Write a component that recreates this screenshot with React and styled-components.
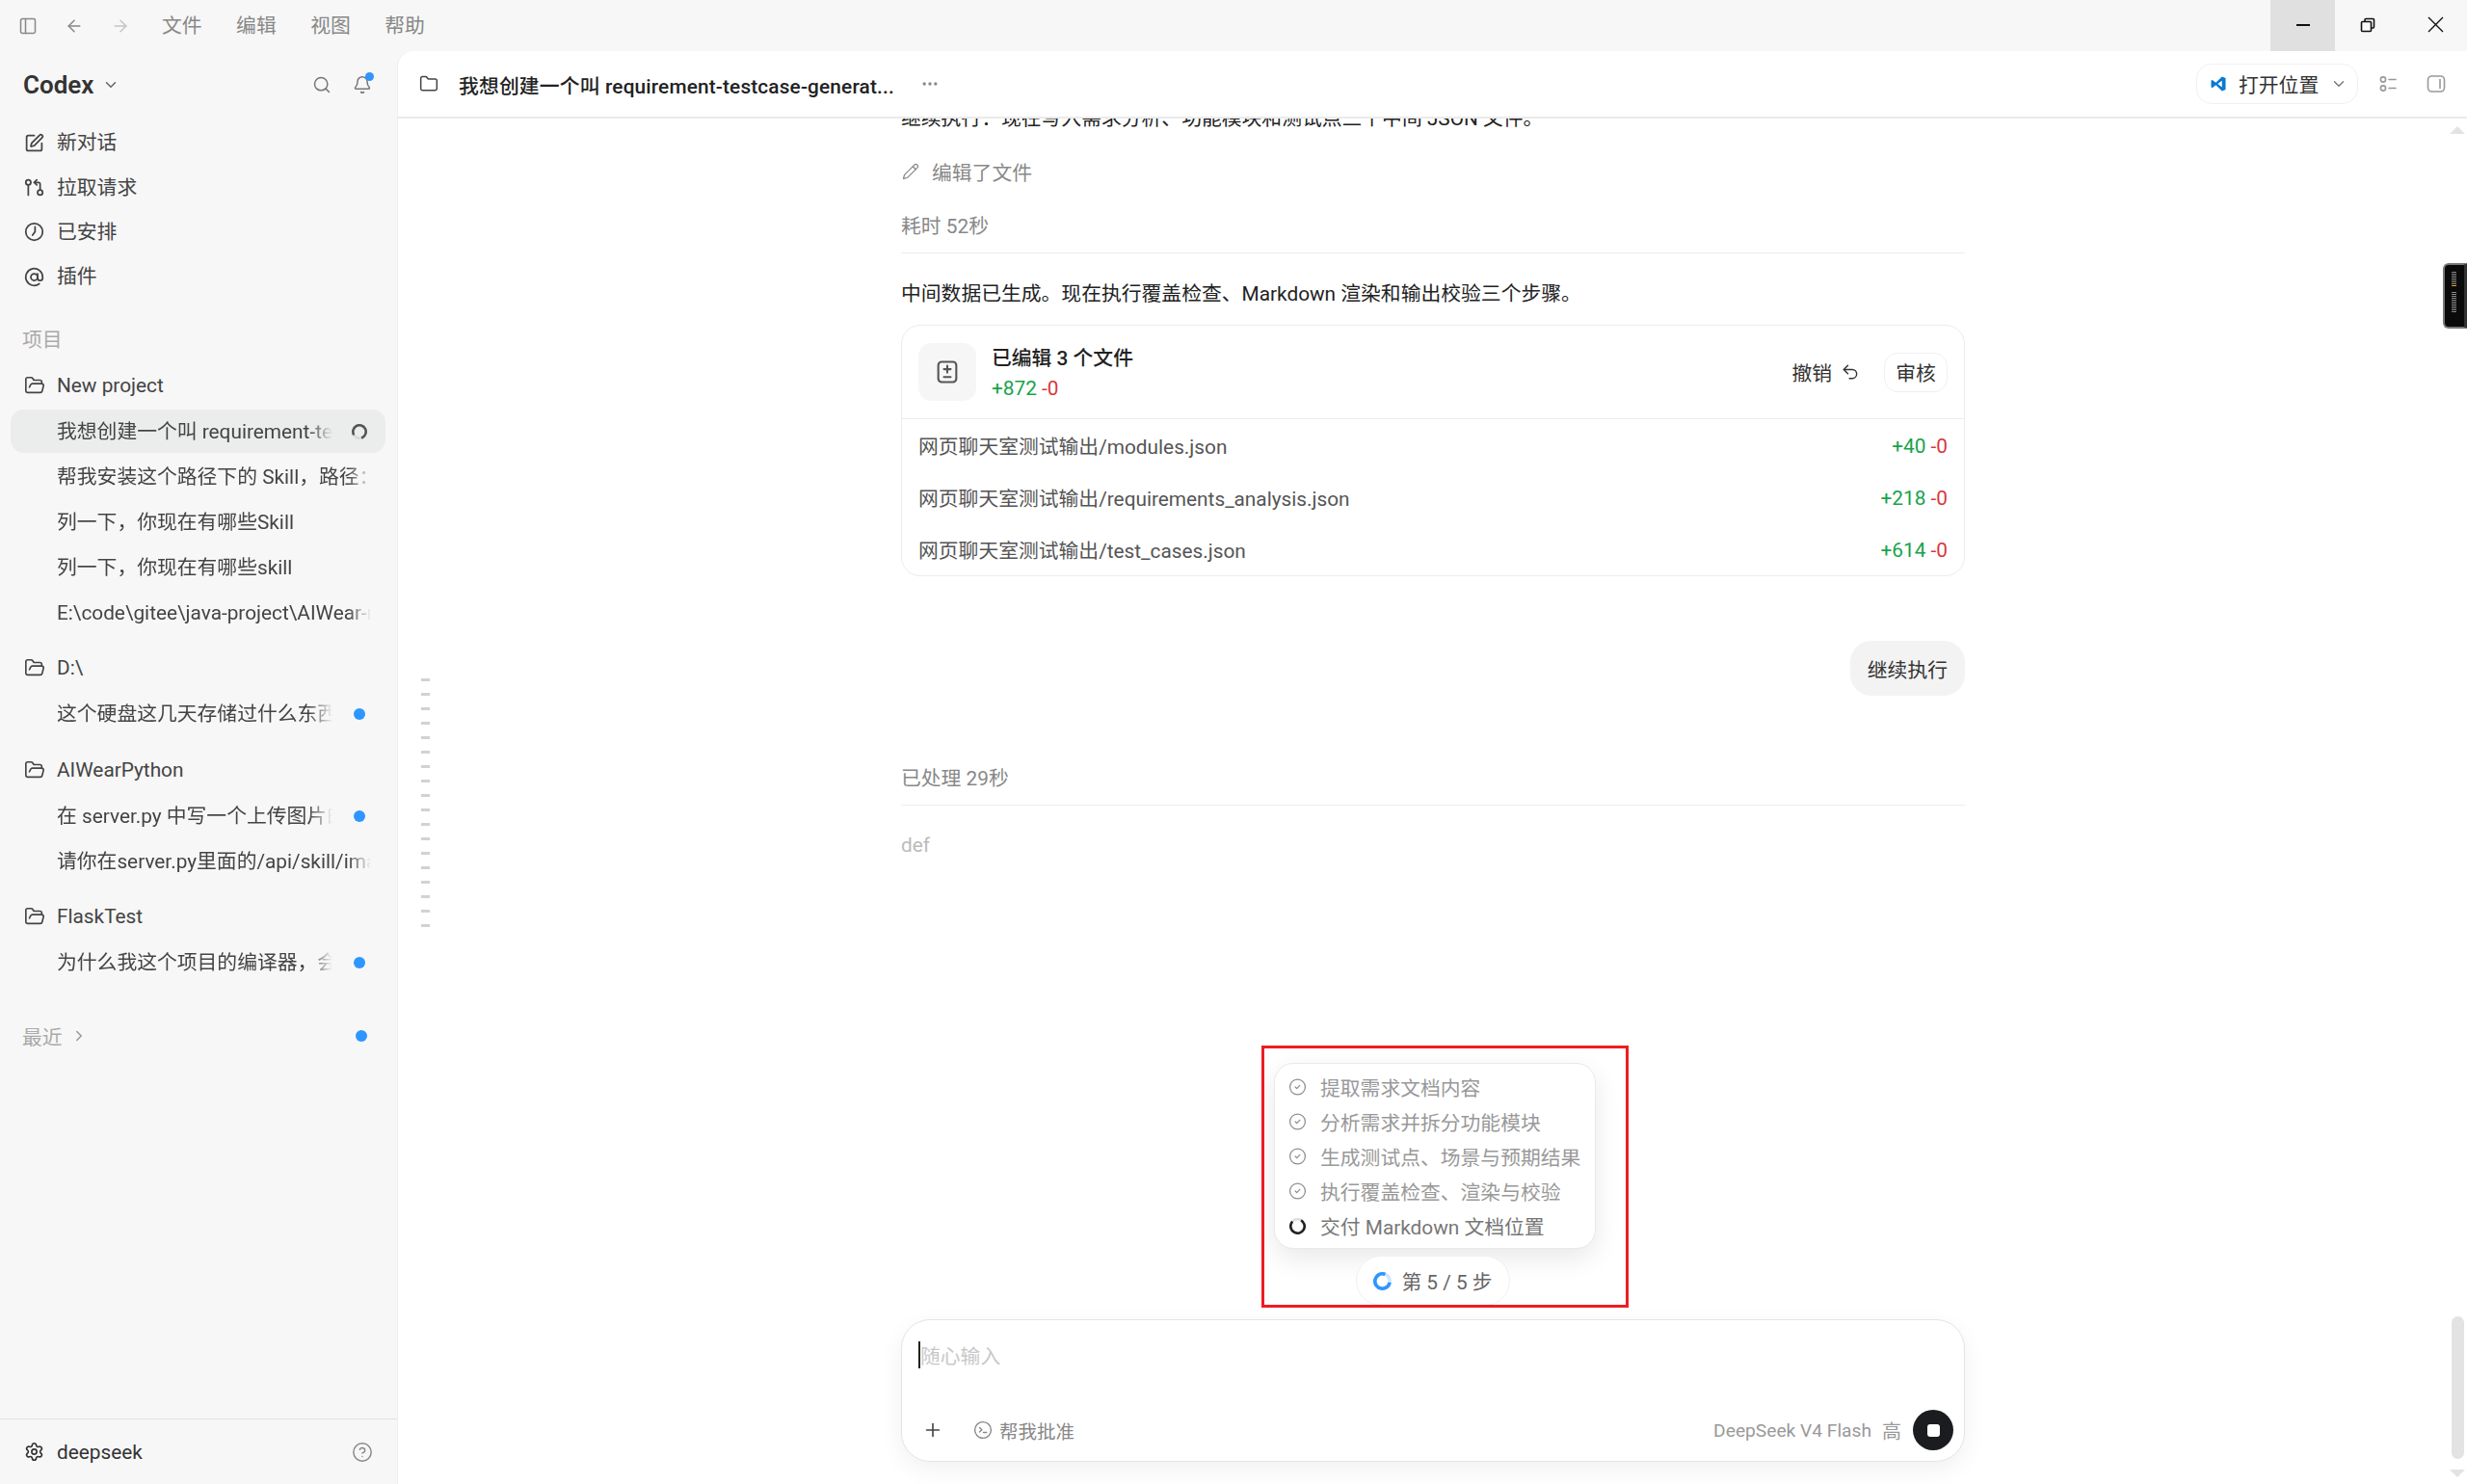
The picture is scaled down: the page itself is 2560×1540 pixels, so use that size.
import styled, { createGlobalStyle } from "styled-components";
import {
  ArrowLeft,
  ArrowRight,
  AtSign,
  Bell,
  ChevronDown,
  ChevronRight,
  CircleCheck,
  CircleHelp,
  Ellipsis,
  Folder,
  FolderOpen,
  GitPullRequestArrow,
  PanelLeft,
  Pencil,
  Plus,
  Search,
  Settings,
  SquarePen,
  Undo2,
} from "lucide-react";

const GlobalStyle = createGlobalStyle`
  html, body {
    margin: 0;
    padding: 0;
    background: #f7f7f7;
    font-family: Roboto, "Noto Sans CJK SC", sans-serif;
    font-size: 20.8px;
    color: #333;
  }
  * { box-sizing: border-box; }
`;

const Page = styled.div`
  width: 2560px;
  height: 1540px;
  display: flex;
  flex-direction: column;
  overflow: hidden;
  background: #f7f7f7;
`;

/* barra de titulo */
const TitleBar = styled.div`
  height: 53px;
  flex-shrink: 0;
  display: flex;
  align-items: center;
  padding-left: 19px;
  color: #888;
`;

const TitleIcons = styled.div`
  display: flex;
  align-items: center;
  gap: 28px;
  margin-right: 33px;
`;

const Menu = styled.div`
  display: flex;
  gap: 35.5px;
`;

const MenuItem = styled.span`
  color: #888;
  font-size: 20.8px;
  line-height: 30px;
`;

const WindowButtons = styled.div`
  display: flex;
  height: 53px;
  margin-left: auto;
`;

const WindowButton = styled.div`
  width: ${({ $wide }) => ($wide ? "70px" : "67px")};
  height: 53px;
  padding-bottom: 2px;
  padding-left: ${({ $wide }) => ($wide ? "5px" : "0")};
  display: flex;
  align-items: center;
  justify-content: center;
  background: ${({ $active }) => ($active ? "#e0e0e0" : "transparent")};
  color: #111;
`;

const Body = styled.div`
  flex: 1;
  display: flex;
  min-height: 0;
`;

/* barra lateral */
const Sidebar = styled.aside`
  width: 413px;
  flex-shrink: 0;
  display: flex;
  flex-direction: column;
`;

const SidebarHead = styled.div`
  height: 72px;
  display: flex;
  align-items: center;
  padding: 0 24px 2px;
`;

const Brand = styled.div`
  display: flex;
  align-items: center;
  gap: 8px;
  font-size: 26px;
  font-weight: 600;
  color: #333;
`;

const HeadActions = styled.div`
  margin-left: auto;
  display: flex;
  align-items: center;
  gap: 22px;
  color: #777;
  padding-right: 3px;
`;

const BellWrap = styled.span`
  position: relative;
  display: flex;
`;

const BellDot = styled.i`
  position: absolute;
  top: -3px;
  right: -2px;
  width: 9px;
  height: 9px;
  border-radius: 50%;
  background: #2f96ff;
`;

const NavRow = styled.div`
  height: 46.4px;
  display: flex;
  align-items: center;
  gap: 13px;
  padding-left: 25px;
  color: #444;
  line-height: 30px;
`;

const SectionLabel = styled.div`
  height: 47.5px;
  margin-top: 17px;
  padding-left: 23px;
  display: flex;
  align-items: center;
  color: #aaa;
`;

const ProjectRow = styled.div`
  height: 49px;
  margin-top: ${({ $first }) => ($first ? "0" : "9.5px")};
  display: flex;
  align-items: center;
  gap: 12px;
  padding-left: 25px;
  color: #444;
`;

const SessionRow = styled.div`
  height: ${({ $active }) => ($active ? "45px" : "47px")};
  margin: ${({ $active }) => ($active ? "1px 13px 1px 11px" : "0 13px 0 11px")};
  padding-left: 48px;
  display: flex;
  align-items: center;
  position: relative;
  border-radius: 14px;
  background: ${({ $active }) => ($active ? "#ebecec" : "transparent")};
  color: #444;
`;

const SessionTitle = styled.span`
  display: block;
  width: ${({ $short }) => ($short ? "286px" : "326px")};
  overflow: hidden;
  white-space: nowrap;
  line-height: 30px;
  -webkit-mask-image: linear-gradient(to right, #000 calc(100% - 24px), transparent);
  mask-image: linear-gradient(to right, #000 calc(100% - 24px), transparent);
`;

const TrailSlot = styled.span`
  position: absolute;
  right: 18px;
  top: 0;
  bottom: 0;
  width: 18px;
  display: flex;
  align-items: center;
  justify-content: center;
`;

const BlueDot = styled.i`
  width: 12px;
  height: 12px;
  border-radius: 50%;
  background: #2f96ff;
`;

const RecentRow = styled.div`
  height: 46px;
  margin: 29px 13px 0 23px;
  display: flex;
  align-items: center;
  gap: 8px;
  position: relative;
  color: #aaa;
`;

const RecentDot = styled(BlueDot)`
  margin-left: auto;
  margin-right: 19px;
`;

const SidebarFooter = styled.div`
  margin-top: auto;
  height: 68px;
  border-top: 1px solid #e2e2e2;
  display: flex;
  align-items: center;
  gap: 13px;
  padding: 0 26px 0 25px;
  color: #333;
`;

const HelpIcon = styled.span`
  margin-left: auto;
  display: flex;
  color: #888;
`;

/* area principal */
const Main = styled.main`
  flex: 1;
  min-width: 0;
  display: flex;
  flex-direction: column;
  background: #fff;
  border-top-left-radius: 16px;
  box-shadow: -1px 0 0 #efefef;
`;

const MainHeader = styled.header`
  height: 70px;
  flex-shrink: 0;
  display: flex;
  align-items: center;
  padding: 0 0 0 22px;
  border-bottom: 2px solid #ebebeb;
`;

const HeaderTitle = styled.span`
  margin-left: 21px;
  font-weight: 500;
  color: #222;
  line-height: 30px;
  letter-spacing: 0.16px;
  position: relative;
  top: 3px;
`;

const HeaderMore = styled.span`
  display: flex;
  margin-left: 27px;
  color: #888;
`;

const OpenButton = styled.div`
  margin-left: auto;
  width: 168px;
  height: 42px;
  border: 1px solid #f0f0f0;
  border-radius: 16px;
  display: flex;
  align-items: center;
  gap: 12px;
  padding-left: 13px;
  color: #333;
`;

const OpenChevron = styled.span`
  display: flex;
  color: #777;
  margin-left: 0;
`;

const HeaderTools = styled.div`
  display: flex;
  align-items: center;
  gap: 30px;
  margin: 0 22px 0 21px;
  color: #999;
`;

const Scroller = styled.div`
  flex: 1;
  min-height: 0;
  position: relative;
  overflow: hidden;
`;

const Column = styled.div`
  width: 1104px;
  height: 100%;
  margin-left: 522px;
  display: flex;
  flex-direction: column;
  color: #222;
`;

const Paragraph = styled.div`
  line-height: 34px;
  margin-top: ${({ $top }) => $top || "0"};
  white-space: nowrap;
`;

const EditedLine = styled.div`
  height: 34px;
  margin-top: 21px;
  display: flex;
  align-items: center;
  gap: 13px;
  padding-left: 1px;
  color: #888;
`;

const DurationLine = styled.div`
  line-height: 34px;
  margin-top: ${({ $top }) => $top};
  padding-bottom: 10px;
  border-bottom: 1px solid #ececec;
  color: #888;
`;

const Card = styled.section`
  margin-top: 15px;
  border: 1px solid #ececec;
  border-radius: 20px;
  overflow: hidden;
`;

const CardHeader = styled.div`
  height: 97px;
  display: flex;
  align-items: center;
  padding: 0 17px;
  border-bottom: 1px solid #ececec;
`;

const CardIconBox = styled.div`
  width: 60px;
  height: 60px;
  border-radius: 14px;
  background: #f6f6f6;
  display: flex;
  align-items: center;
  justify-content: center;
  color: #555;
`;

const CardSummary = styled.div`
  margin-left: 16px;
  display: flex;
  flex-direction: column;
  gap: 1px;
`;

const CardTitle = styled.div`
  font-weight: 500;
  line-height: 30px;
  color: #222;
`;

const Stat = styled.span`
  font-size: 20.8px;
  line-height: 28px;
  white-space: nowrap;
  position: relative;
  top: 1px;
`;

const Added = styled.span`
  color: #16a34a;
`;

const Removed = styled.span`
  color: #d9363e;
`;

const CardActions = styled.div`
  margin-left: auto;
  display: flex;
  align-items: center;
  color: #333;
`;

const UndoLink = styled.span`
  display: flex;
  align-items: center;
  gap: 9px;
  margin-right: 25px;
`;

const ReviewButton = styled.span`
  width: 66px;
  height: 41px;
  border: 1px solid #f0f0f0;
  border-radius: 14px;
  display: flex;
  align-items: center;
  justify-content: center;
`;

const FileRow = styled.div`
  height: 54px;
  display: flex;
  align-items: center;
  justify-content: space-between;
  padding: 0 17px;
  color: #555;
`;

const Bubble = styled.div`
  margin-top: 67px;
  align-self: flex-end;
  height: 57px;
  padding: 0 18px;
  display: flex;
  align-items: center;
  background: #f3f3f3;
  border-radius: 22px;
  color: #333;
`;

const Faded = styled.div`
  margin-top: 24px;
  line-height: 34px;
  color: #bbb;
`;

/* lista de passos */
const StepsDock = styled.div`
  position: relative;
  margin-top: auto;
  margin-left: 387px;
  width: 334px;
`;

const StepsCard = styled.div`
  height: 193px;
  padding-top: 6px;
  background: #fff;
  border: 1px solid #e9e9e9;
  border-radius: 20px;
  box-shadow: 0 10px 28px rgba(0, 0, 0, 0.09);
`;

const StepRow = styled.div`
  height: 36px;
  display: flex;
  align-items: center;
  gap: 14px;
  padding-left: 14px;
  white-space: nowrap;
  color: ${({ $current }) => ($current ? "#777" : "#999")};
`;

const StepIcon = styled.span`
  width: 19px;
  display: flex;
  justify-content: center;
  color: #8f8f8f;
`;

const StepPill = styled.div`
  width: 160px;
  height: 52px;
  margin: 7px 0 0 85px;
  border: 1px solid #f0f0f0;
  border-radius: 26px;
  display: flex;
  align-items: center;
  justify-content: center;
  gap: 10px;
  color: #666;
  background: #fff;
`;

const RedMark = styled.div`
  position: absolute;
  top: -18px;
  left: -13px;
  right: -34px;
  bottom: -2px;
  border: 3px solid #ed1c24;
  pointer-events: none;
`;

/* caixa de entrada */
const Composer = styled.div`
  height: 148px;
  margin: 14px 0 23px;
  flex-shrink: 0;
  border: 1px solid #e4e4e4;
  border-radius: 30px;
  background: #fff;
  box-shadow: 0 8px 26px rgba(0, 0, 0, 0.06);
  display: flex;
  flex-direction: column;
  padding: 21px 11px 11px 17px;
`;

const InputLine = styled.div`
  display: flex;
  align-items: center;
  height: 30px;
  color: #c8c8c8;
`;

const Caret = styled.i`
  width: 2px;
  height: 28px;
  background: #222;
`;

const ComposerBar = styled.div`
  margin-top: auto;
  padding-left: 4px;
  display: flex;
  align-items: center;
  height: 42px;
`;

const ApproveLabel = styled.span`
  display: flex;
  align-items: center;
  gap: 7px;
  margin-left: 31px;
  color: #888;
  font-size: 19.5px;
`;

const ModelLabel = styled.span`
  margin-left: auto;
  color: #999;
  font-size: 19.2px;
  white-space: nowrap;
`;

const EffortLabel = styled(ModelLabel)`
  margin-left: 11px;
  font-size: 20px;
`;

const StopButton = styled.span`
  width: 42px;
  height: 42px;
  margin-left: 12px;
  border-radius: 50%;
  background: #1b1c20;
  display: flex;
  align-items: center;
  justify-content: center;
`;

const StopSquare = styled.i`
  width: 13px;
  height: 13px;
  border-radius: 3px;
  background: #fff;
`;

/* extras sobrepostos */
const Minimap = styled.div`
  position: absolute;
  left: 24px;
  top: 581px;
  display: flex;
  flex-direction: column;
  gap: 12px;
`;

const MinimapTick = styled.i`
  display: block;
  width: 9px;
  height: 3px;
  background: #d2d2d2;
`;

const ScrollTriangle = styled.i`
  position: absolute;
  right: 2px;
  width: 0;
  height: 0;
  border-left: 8px solid transparent;
  border-right: 8px solid transparent;
  ${({ $down }) =>
    $down
      ? "bottom: 7px; border-top: 8px solid #e3e3e3;"
      : "top: 8px; border-bottom: 8px solid #e3e3e3;"}
`;

const ScrollThumb = styled.i`
  position: absolute;
  right: 3px;
  bottom: 26px;
  width: 13px;
  height: 148px;
  border-radius: 7px;
  background: #e3e3e3;
`;

const MeterWidget = styled.div`
  position: absolute;
  right: 0;
  top: 150px;
  width: 25px;
  height: 68px;
  background: #0a0a0a;
  border: 2px solid #777;
  border-right: 3px solid #333;
  border-radius: 6px 0 0 6px;
  display: flex;
  flex-direction: column;
  align-items: flex-start;
  padding: 7px 0 0 7px;
  gap: 1px;
`;

const MeterTick = styled.i`
  display: block;
  width: 5px;
  height: 1px;
  margin-bottom: ${({ $gap }) => ($gap ? "5px" : "0")};
  background: ${({ $hot }) => ($hot ? "#f39c12" : "#8a8a8a")};
`;

const Ring = ({ size = 18, color = "#222", track = "#ddd", width = 2.6, turn = 0 }) => {
  const r = (size - width) / 2;
  const c = 2 * Math.PI * r;
  return (
    <svg width={size} height={size} viewBox={`0 0 ${size} ${size}`}>
      <circle cx={size / 2} cy={size / 2} r={r} fill="none" stroke={track} strokeWidth={width} />
      <circle
        cx={size / 2}
        cy={size / 2}
        r={r}
        fill="none"
        stroke={color}
        strokeWidth={width}
        strokeDasharray={`${c * 0.78} ${c}`}
        transform={`rotate(${turn} ${size / 2} ${size / 2})`}
      />
    </svg>
  );
};

const ClockIcon = () => (
  <svg width="21" height="21" viewBox="0 0 24 24" fill="none" stroke="currentColor" strokeWidth="2" strokeLinecap="round" strokeLinejoin="round">
    <circle cx="12" cy="12" r="10" />
    <path d="M13 6v6l-3 4" />
  </svg>
);

const DiffIcon = () => (
  <svg width="28" height="28" viewBox="0 0 24 24" fill="none" stroke="currentColor" strokeWidth="1.8" strokeLinecap="round">
    <rect x="4" y="3" width="16" height="18" rx="3" />
    <path d="M12 6.500v6M9 9.500h6M9 16.500h6" />
  </svg>
);

const VsCodeIcon = () => (
  <svg width="18" height="20" viewBox="0 0 24 24">
    <path d="M17 2 8.500 10.200 3.600 6.500 2 7.400v9.200l1.600.9 4.900-3.700L17 22l5-2V4zM17 7.500v9L11 12z" fill="#0a7ad1" fillRule="evenodd" />
  </svg>
);

const ChecklistIcon = () => (
  <svg width="20" height="20" viewBox="0 0 20 20" fill="none" stroke="currentColor" strokeWidth="1.6" strokeLinecap="round">
    <circle cx="5" cy="5.500" r="2.600" />
    <circle cx="5" cy="14.500" r="2.600" />
    <path d="M11 5.500h7M11 14.500h7" />
  </svg>
);

const SidePanelIcon = () => (
  <svg width="20" height="20" viewBox="0 0 20 20" fill="none" stroke="currentColor" strokeWidth="1.6">
    <rect x="1.500" y="2" width="17" height="16" rx="4" />
    <path d="M14 5v10" />
  </svg>
);

const ApproveIcon = () => (
  <svg width="20" height="20" viewBox="0 0 20 20" fill="none" stroke="currentColor" strokeWidth="1.4" strokeLinecap="round" strokeLinejoin="round">
    <circle cx="10" cy="10" r="8.400" />
    <path d="m6.500 7.500 2.400 2.200-2.400 2.200M10.500 12.500h3.200" />
  </svg>
);

const RestoreIcon = () => (
  <svg width="16" height="16" viewBox="0 0 16 16" fill="none" stroke="currentColor" strokeWidth="1.6">
    <rect x="1.500" y="4.500" width="10" height="10" rx="1" />
    <path d="M5 4.500V2.500a1 1 0 0 1 1-1h7.500a1 1 0 0 1 1 1V10a1 1 0 0 1-1 1h-2" />
  </svg>
);

const MinimizeIcon = () => (
  <svg width="16" height="16" viewBox="0 0 16 16" stroke="currentColor" strokeWidth="2">
    <path d="M1 8h14" />
  </svg>
);

const CloseIcon = () => (
  <svg width="17" height="17" viewBox="0 0 17 17" stroke="currentColor" strokeWidth="1.4">
    <path d="m1 1 15 15M16 1 1 16" />
  </svg>
);

const navItems = [
  { icon: <SquarePen size={21} strokeWidth={2} />, label: "新对话" },
  { icon: <GitPullRequestArrow size={21} strokeWidth={2} />, label: "拉取请求" },
  { icon: <ClockIcon />, label: "已安排" },
  { icon: <AtSign size={21} strokeWidth={2} />, label: "插件" },
];

const projects = [
  {
    name: "New project",
    sessions: [
      { title: "我想创建一个叫 requirement-testcase-generat", short: true, active: true, spin: true },
      { title: "帮我安装这个路径下的 Skill，路径：" },
      { title: "列一下，你现在有哪些Skill" },
      { title: "列一下，你现在有哪些skill" },
      { title: "E:\\code\\gitee\\java-project\\AIWear-r" },
    ],
  },
  { name: "D:\\", sessions: [{ title: "这个硬盘这几天存储过什么东西", short: true, dot: true }] },
  {
    name: "AIWearPython",
    sessions: [
      { title: "在 server.py 中写一个上传图片的", short: true, dot: true },
      { title: "请你在server.py里面的/api/skill/ima" },
    ],
  },
  { name: "FlaskTest", sessions: [{ title: "为什么我这个项目的编译器，会", short: true, dot: true }] },
];

const files = [
  { path: "网页聊天室测试输出/modules.json", add: "+40" },
  { path: "网页聊天室测试输出/requirements_analysis.json", add: "+218" },
  { path: "网页聊天室测试输出/test_cases.json", add: "+614" },
];

const steps = ["提取需求文档内容", "分析需求并拆分功能模块", "生成测试点、场景与预期结果", "执行覆盖检查、渲染与校验"];

const App = () => {
  return (
    <Page>
      <GlobalStyle />
      <TitleBar>
        <TitleIcons>
          <PanelLeft size={20} strokeWidth={1.8} />
          <ArrowLeft size={20} strokeWidth={1.8} />
          <ArrowRight size={20} strokeWidth={1.8} color="#c4c4c4" />
        </TitleIcons>
        <Menu>
          {["文件", "编辑", "视图", "帮助"].map((m) => (
            <MenuItem key={m}>{m}</MenuItem>
          ))}
        </Menu>
        <WindowButtons>
          <WindowButton $active><MinimizeIcon /></WindowButton>
          <WindowButton><RestoreIcon /></WindowButton>
          <WindowButton $wide><CloseIcon /></WindowButton>
        </WindowButtons>
      </TitleBar>

      <Body>
        <Sidebar>
          <SidebarHead>
            <Brand>
              Codex
              <ChevronDown size={18} strokeWidth={2} color="#666" />
            </Brand>
            <HeadActions>
              <Search size={20} strokeWidth={1.8} />
              <BellWrap>
                <Bell size={20} strokeWidth={1.8} />
                <BellDot />
              </BellWrap>
            </HeadActions>
          </SidebarHead>

          {navItems.map((n) => (
            <NavRow key={n.label}>
              {n.icon}
              {n.label}
            </NavRow>
          ))}

          <SectionLabel>项目</SectionLabel>

          {projects.map((p, i) => (
            <div key={p.name}>
              <ProjectRow $first={i === 0}>
                <FolderOpen size={22} strokeWidth={1.8} />
                {p.name}
              </ProjectRow>
              {p.sessions.map((s) => (
                <SessionRow key={s.title} $active={s.active}>
                  <SessionTitle $short={s.short}>{s.title}</SessionTitle>
                  {s.spin && (
                    <TrailSlot>
                      <Ring size={16} color="#555" track="#d8d8d8" width={2.6} turn={150} />
                    </TrailSlot>
                  )}
                  {s.dot && (
                    <TrailSlot>
                      <BlueDot />
                    </TrailSlot>
                  )}
                </SessionRow>
              ))}
            </div>
          ))}

          <RecentRow>
            最近
            <ChevronRight size={18} strokeWidth={2} color="#999" />
            <RecentDot />
          </RecentRow>

          <SidebarFooter>
            <Settings size={21} strokeWidth={1.9} />
            deepseek
            <HelpIcon>
              <CircleHelp size={22} strokeWidth={1.6} />
            </HelpIcon>
          </SidebarFooter>
        </Sidebar>

        <Main>
          <MainHeader>
            <Folder size={20} strokeWidth={1.8} color="#444" />
            <HeaderTitle>我想创建一个叫 requirement-testcase-generat...</HeaderTitle>
            <HeaderMore>
              <Ellipsis size={20} strokeWidth={2} />
            </HeaderMore>
            <OpenButton>
              <VsCodeIcon />
              打开位置
              <OpenChevron>
                <ChevronDown size={18} strokeWidth={1.8} />
              </OpenChevron>
            </OpenButton>
            <HeaderTools>
              <ChecklistIcon />
              <SidePanelIcon />
            </HeaderTools>
          </MainHeader>

          <Scroller>
            <Column>
              <Paragraph $top="-17px">继续执行：现在写入需求分析、功能模块和测试点三个中间 JSON 文件。</Paragraph>
              <EditedLine>
                <Pencil size={18} strokeWidth={1.7} />
                编辑了文件
              </EditedLine>
              <DurationLine $top="23px">耗时 52秒</DurationLine>
              <Paragraph $top="25px">中间数据已生成。现在执行覆盖检查、Markdown 渲染和输出校验三个步骤。</Paragraph>

              <Card>
                <CardHeader>
                  <CardIconBox>
                    <DiffIcon />
                  </CardIconBox>
                  <CardSummary>
                    <CardTitle>已编辑 3 个文件</CardTitle>
                    <Stat>
                      <Added>+872</Added> <Removed>-0</Removed>
                    </Stat>
                  </CardSummary>
                  <CardActions>
                    <UndoLink>
                      撤销
                      <Undo2 size={20} strokeWidth={1.7} />
                    </UndoLink>
                    <ReviewButton>审核</ReviewButton>
                  </CardActions>
                </CardHeader>
                {files.map((f) => (
                  <FileRow key={f.path}>
                    {f.path}
                    <Stat>
                      <Added>{f.add}</Added> <Removed>-0</Removed>
                    </Stat>
                  </FileRow>
                ))}
              </Card>

              <Bubble>继续执行</Bubble>

              <DurationLine $top="69px">已处理 29秒</DurationLine>
              <Faded>def</Faded>

              <StepsDock>
                <StepsCard>
                  {steps.map((s) => (
                    <StepRow key={s}>
                      <StepIcon>
                        <CircleCheck size={20} strokeWidth={1.6} />
                      </StepIcon>
                      {s}
                    </StepRow>
                  ))}
                  <StepRow $current>
                    <StepIcon>
                      <Ring size={17} color="#222" track="#ddd" turn={-60} />
                    </StepIcon>
                    交付 Markdown 文档位置
                  </StepRow>
                </StepsCard>
                <StepPill>
                  <Ring size={19} color="#2f96ff" track="#cfe6ff" width={3.6} turn={10} />
                  第 5 / 5 步
                </StepPill>
                <RedMark />
              </StepsDock>

              <Composer>
                <InputLine>
                  <Caret />
                  随心输入
                </InputLine>
                <ComposerBar>
                  <Plus size={22} strokeWidth={1.8} color="#444" />
                  <ApproveLabel>
                    <ApproveIcon />
                    帮我批准
                  </ApproveLabel>
                  <ModelLabel>DeepSeek V4 Flash</ModelLabel>
                  <EffortLabel>高</EffortLabel>
                  <StopButton>
                    <StopSquare />
                  </StopButton>
                </ComposerBar>
              </Composer>
            </Column>

            <Minimap>
              {Array.from({ length: 18 }, (_, i) => (
                <MinimapTick key={i} />
              ))}
            </Minimap>
            <ScrollTriangle />
            <ScrollThumb />
            <ScrollTriangle $down />
            <MeterWidget>
              {Array.from({ length: 19 }, (_, i) => (
                <MeterTick key={i} $hot={i === 7} $gap={i === 7} />
              ))}
            </MeterWidget>
          </Scroller>
        </Main>
      </Body>
    </Page>
  );
};

export default App;
